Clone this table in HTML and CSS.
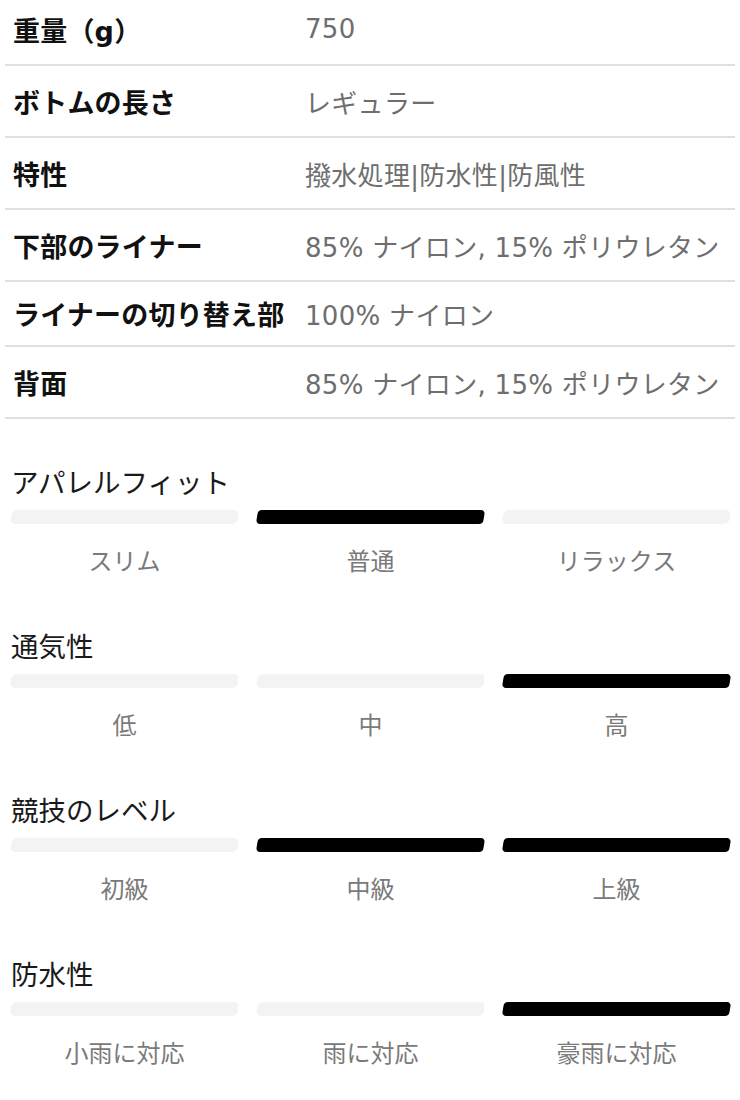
FILE: index.html
```html
<!DOCTYPE html>
<html lang="ja">
<head>
<meta charset="utf-8">
<link rel="stylesheet" href="styles.css">
</head>
<body>
<div class="specs">
  <div class="row"><div class="label">重量（g）</div><div class="value">750</div></div>
  <div class="row"><div class="label">ボトムの長さ</div><div class="value">レギュラー</div></div>
  <div class="row"><div class="label">特性</div><div class="value">撥水処理|防水性|防風性</div></div>
  <div class="row"><div class="label">下部のライナー</div><div class="value">85% ナイロン, 15% ポリウレタン</div></div>
  <div class="row row--tight"><div class="label">ライナーの切り替え部</div><div class="value">100% ナイロン</div></div>
  <div class="row"><div class="label">背面</div><div class="value">85% ナイロン, 15% ポリウレタン</div></div>
</div>

<div class="ratings">
  <section class="rating">
    <h3 class="rating-title">アパレルフィット</h3>
    <div class="bars">
      <span class="bar"></span><span class="bar bar--on"></span><span class="bar"></span>
    </div>
    <div class="scale"><span>スリム</span><span>普通</span><span>リラックス</span></div>
  </section>
  <section class="rating">
    <h3 class="rating-title">通気性</h3>
    <div class="bars">
      <span class="bar"></span><span class="bar"></span><span class="bar bar--on"></span>
    </div>
    <div class="scale"><span>低</span><span>中</span><span>高</span></div>
  </section>
  <section class="rating">
    <h3 class="rating-title">競技のレベル</h3>
    <div class="bars">
      <span class="bar"></span><span class="bar bar--on"></span><span class="bar bar--on"></span>
    </div>
    <div class="scale"><span>初級</span><span>中級</span><span>上級</span></div>
  </section>
  <section class="rating">
    <h3 class="rating-title">防水性</h3>
    <div class="bars">
      <span class="bar"></span><span class="bar"></span><span class="bar bar--on"></span>
    </div>
    <div class="scale"><span>小雨に対応</span><span>雨に対応</span><span>豪雨に対応</span></div>
  </section>
</div>
</body>
</html>
```
FILE: styles.css
```css
html, body {
  margin: 0;
  padding: 0;
  background: #fff;
}
body {
  font-family: "DejaVu Sans", "Noto Sans CJK JP", sans-serif;
  color: #111;
}
.specs {
  margin: -6px 5px 0 5px;
}
.row {
  display: grid;
  grid-template-columns: 300px 1fr;
  align-items: center;
  height: 72px;
  box-sizing: border-box;
  border-bottom: 2px solid #e0e0e0;
}
.row--tight {
  height: 65px;
}
.label {
  padding-left: 8px;
  font-size: 27px;
  font-weight: 700;
  letter-spacing: 0.2px;
  color: #111;
  white-space: nowrap;
}
.value {
  font-size: 26px;
  letter-spacing: 0.3px;
  color: #6e6e6e;
  white-space: nowrap;
}
.ratings {
  margin-top: 46px;
  padding: 0 10px 0 11px;
}
.rating {
  margin-bottom: 51px;
}
.rating-title {
  margin: 0;
  font-size: 27.5px;
  font-weight: 400;
  line-height: 36px;
  color: #1a1a1a;
}
.bars {
  display: grid;
  grid-template-columns: repeat(3, 1fr);
  column-gap: 19px;
  margin-top: 9px;
}
.bar {
  display: block;
  height: 14px;
  border-radius: 5px;
  background: #f3f3f3;
  transform: skewX(-9deg);
}
.bar--on {
  background: #000;
  border-radius: 4px;
}
.scale {
  display: grid;
  grid-template-columns: repeat(3, 1fr);
  column-gap: 19px;
  margin-top: 22px;
  font-size: 24px;
  line-height: 32px;
  color: #7a7a7a;
  text-align: center;
}
```
